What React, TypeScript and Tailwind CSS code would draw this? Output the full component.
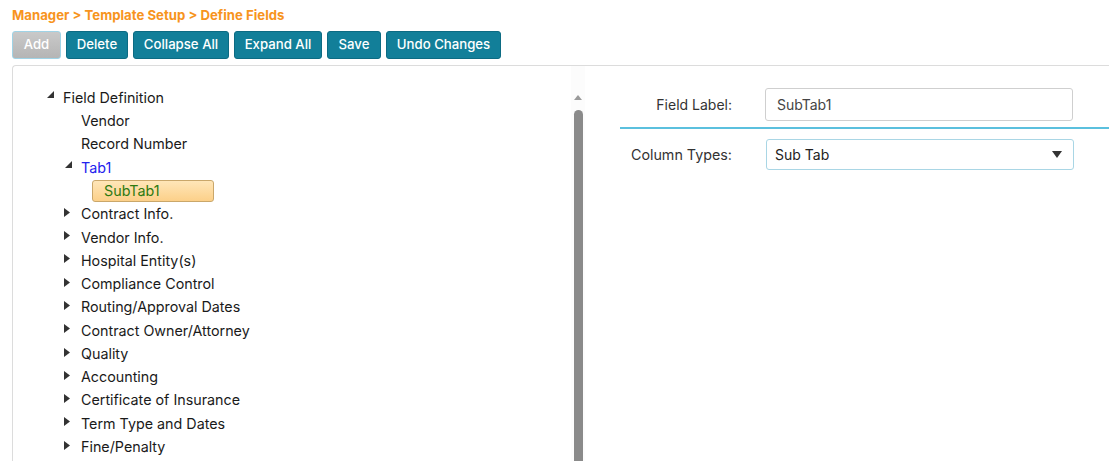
import React from 'react';

type Node = { label: string; level: number; state: 'open' | 'closed' | 'leaf'; kind?: 'tab' | 'selected' };

const nodes: Node[] = [
  { label: 'Field Definition', level: 0, state: 'open' },
  { label: 'Vendor', level: 1, state: 'leaf' },
  { label: 'Record Number', level: 1, state: 'leaf' },
  { label: 'Tab1', level: 1, state: 'open', kind: 'tab' },
  { label: 'SubTab1', level: 2, state: 'leaf', kind: 'selected' },
  { label: 'Contract Info.', level: 1, state: 'closed' },
  { label: 'Vendor Info.', level: 1, state: 'closed' },
  { label: 'Hospital Entity(s)', level: 1, state: 'closed' },
  { label: 'Compliance Control', level: 1, state: 'closed' },
  { label: 'Routing/Approval Dates', level: 1, state: 'closed' },
  { label: 'Contract Owner/Attorney', level: 1, state: 'closed' },
  { label: 'Quality', level: 1, state: 'closed' },
  { label: 'Accounting', level: 1, state: 'closed' },
  { label: 'Certificate of Insurance', level: 1, state: 'closed' },
  { label: 'Term Type and Dates', level: 1, state: 'closed' },
  { label: 'Fine/Penalty', level: 1, state: 'closed' },
];

const Toggle = ({ state }: { state: Node['state'] }) => {
  if (state === 'leaf') return <span className="w-[18px] shrink-0" />;
  return (
    <span className="w-[18px] shrink-0 flex items-center">
      {state === 'open' ? (
        <svg width="7" height="7" viewBox="0 0 7 7" className="ml-[2px] -mt-[6px]">
          <path d="M7 0 L7 7 L0 7 Z" fill="#333" />
        </svg>
      ) : (
        <svg width="6" height="9" viewBox="0 0 6 9" className="ml-[1px] -mt-[3px]">
          <path d="M0 0 L6 4.5 L0 9 Z" fill="#333" />
        </svg>
      )}
    </span>
  );
};

const buttons = [
  { label: 'Delete', w: 'w-[62px]' },
  { label: 'Collapse All', w: 'w-[96px]' },
  { label: 'Expand All', w: 'w-[88px]' },
  { label: 'Save', w: 'w-[54px]' },
  { label: 'Undo Changes', w: 'w-[115px]' },
];

const App: React.FC = () => {
  return (
    <div className="w-[1109px] h-[461px] overflow-hidden bg-white pl-[12px] pt-[7px] font-['Inter',sans-serif] text-[14.3px] text-[#222]">
      <div className="text-[13.2px] font-bold text-[#f7941d] leading-[16px]">Manager &gt; Template Setup &gt; Define Fields</div>

      <div className="mt-[8px] flex gap-[5px]">
        <button className="h-[28px] w-[49px] rounded-[3px] border border-[#9fd3e6] bg-gradient-to-b from-[#c9c9c9] to-[#b5b5b5] text-[13.2px] font-medium text-white">
          Add
        </button>
        {buttons.map(b => (
          <button key={b.label} className={`${b.w} h-[28px] rounded-[3px] border border-[#0c6b83] bg-[#127f99] text-[13.2px] font-medium text-white`}>
            {b.label}
          </button>
        ))}
      </div>

      <div className="mt-[6px] flex h-[400px] border-l border-t border-[#dcdcdc] rounded-tl-[4px]">
        {/* Tree */}
        <div className="w-[558px] shrink-0 pt-[20px] pl-[32px]">
          {nodes.map((n, i) => (
            <div key={i} className="h-[23.27px] flex items-center" style={{ paddingLeft: n.level === 0 ? 0 : n.level === 1 ? 18 : 47 }}>
              {n.kind === 'selected' ? (
                <span className="h-[22px] w-[122px] flex items-center pl-[11px] rounded-[3px] border border-[#caa76a] bg-gradient-to-b from-[#ffe6b8] to-[#fcd089] text-[#2d7a12]">
                  {n.label}
                </span>
              ) : (
                <>
                  <Toggle state={n.state} />
                  <span className={n.kind === 'tab' ? 'text-[#2222ee]' : 'text-[#1a1a1a]'}>{n.label}</span>
                </>
              )}
            </div>
          ))}
        </div>

        {/* Scrollbar */}
        <div className="w-[14px] shrink-0 flex flex-col items-center pt-[29px] bg-[#fcfcfc]">
          <svg width="8" height="5" viewBox="0 0 8 5">
            <path d="M0 5 L4 0 L8 5 Z" fill="#9a9a9a" />
          </svg>
          <div className="mt-[10px] w-[9px] flex-1 rounded-t-[5px] bg-[#8a8a8a]" />
        </div>

        {/* Form */}
        <div className="flex-1 pl-[35px] pt-[22px] text-[14px]">
          <div className="flex items-center">
            <span className="w-[112px] text-right text-[#333]">Field Label:</span>
            <div className="ml-[33px] h-[33px] w-[308px] rounded-[3px] border border-[#cfcfcf] flex items-center pl-[11px] text-[#444]">
              SubTab1
            </div>
          </div>
          <div className="mt-[6px] border-b-2 border-[#5bc0de]" />
          <div className="mt-[10px] flex items-center">
            <span className="w-[112px] text-right text-[14.3px] text-[#333]">Column Types:</span>
            <div className="ml-[34px] h-[31px] w-[308px] rounded-[3px] border border-[#a9d6e5] flex items-center justify-between pl-[8px] pr-[11px] text-[#222]">
              <span>Sub Tab</span>
              <svg width="10" height="7" viewBox="0 0 10 7">
                <path d="M0 0 L10 0 L5 7 Z" fill="#333" />
              </svg>
            </div>
          </div>
        </div>
      </div>
    </div>
  );
};

export default App;
